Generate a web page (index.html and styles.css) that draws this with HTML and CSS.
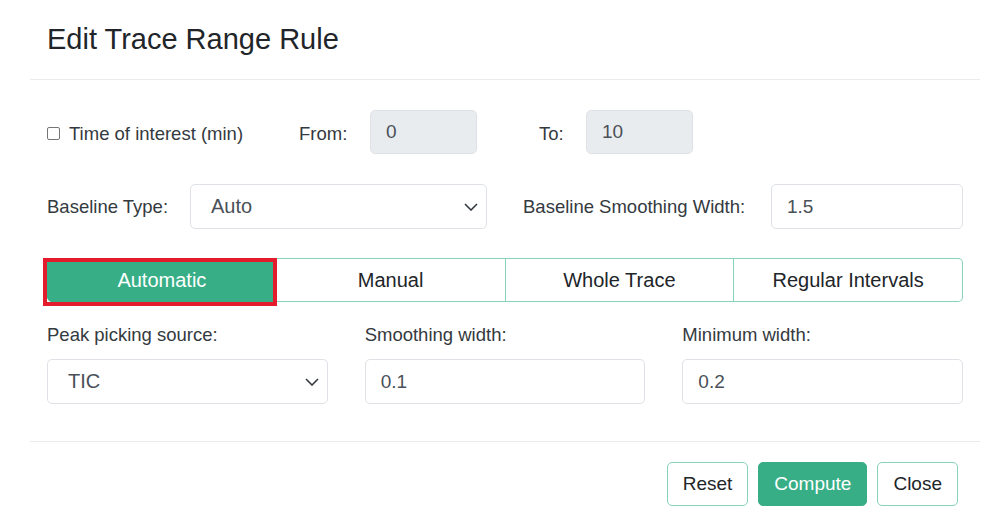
FILE: index.html
```html
<!DOCTYPE html>
<html lang="en">

<head>
    <meta charset="UTF-8">
    <meta name="viewport" content="width=device-width, initial-scale=1.0">
    <title>Edit Trace Range Rule</title>
    <link rel="stylesheet" href="styles.css">
</head>

<body>
    <div class="modal">
        <div class="modal-header">
            <h1>Edit Trace Range Rule</h1>
        </div>

        <div class="modal-body">
            <div class="row time-row">
                <label class="check">
                    <span class="box"></span>
                    Time of interest (min)
                </label>
                <span class="lbl from-lbl">From:</span>
                <input class="field short" type="text" value="0" disabled>
                <span class="lbl to-lbl">To:</span>
                <input class="field short" type="text" value="10" disabled>
            </div>

            <div class="row base-row">
                <span class="lbl type-lbl">Baseline Type:</span>
                <div class="select type-select">
                    <span>Auto</span>
                    <svg class="chev" width="14" height="8" viewBox="0 0 14 8">
                        <path d="M1 1l6 6 6-6" fill="none" stroke="#343a40" stroke-width="1.6" />
                    </svg>
                </div>
                <span class="lbl smooth-lbl">Baseline Smoothing Width:</span>
                <input class="field smooth-input" type="text" value="1.5">
            </div>

            <div class="tabs">
                <button class="tab active">Automatic</button>
                <button class="tab">Manual</button>
                <button class="tab">Whole Trace</button>
                <button class="tab">Regular Intervals</button>
            </div>

            <div class="cols">
                <div class="col">
                    <label>Peak picking source:</label>
                    <div class="select">
                        <span>TIC</span>
                        <svg class="chev" width="14" height="8" viewBox="0 0 14 8">
                            <path d="M1 1l6 6 6-6" fill="none" stroke="#343a40" stroke-width="1.6" />
                        </svg>
                    </div>
                </div>
                <div class="col">
                    <label>Smoothing width:</label>
                    <input class="field" type="text" value="0.1">
                </div>
                <div class="col">
                    <label>Minimum width:</label>
                    <input class="field" type="text" value="0.2">
                </div>
            </div>
        </div>

        <div class="modal-footer">
            <button class="btn">Reset</button>
            <button class="btn primary">Compute</button>
            <button class="btn">Close</button>
        </div>
    </div>
</body>

</html>
```

FILE: styles.css
```css
body {
    font-family: "Liberation Sans", Arial, sans-serif;
    background-color: #fff;
    color: #212529;
    margin: 0;
    padding: 0;
}

.modal {
    width: 950px;
    margin-left: 30px;
}

.modal-header {
    height: 80px;
    box-sizing: border-box;
    display: flex;
    align-items: center;
    padding: 0 17px;
    border-bottom: 1px solid #e9ecef;
}

.modal-header h1 {
    margin: 0;
    font-size: 29px;
    font-weight: 400;
    color: #212529;
}

.modal-body {
    padding: 30px 17px 37px;
    border-bottom: 1px solid #e9ecef;
}

.row {
    display: flex;
    align-items: center;
}

.lbl,
.check,
.cols label {
    font-size: 18.5px;
    color: #343a40;
}

.time-row .lbl,
.time-row .check {
    padding-top: 3px;
}

.field {
    box-sizing: border-box;
    height: 45px;
    padding: 0 15px;
    border: 1px solid #dee2e6;
    border-radius: 5px;
    background-color: #fff;
    font-family: inherit;
    font-size: 19px;
    color: #495057;
}

.field:disabled {
    background-color: #e9ecef;
}

/* row 1 */
.time-row {
    height: 44px;
    margin-bottom: 30px;
}

.check {
    display: flex;
    align-items: center;
    gap: 9px;
    width: 252px;
}

.box {
    width: 11px;
    height: 11px;
    border: 1px solid #767676;
    border-radius: 2px;
}

.from-lbl {
    width: 71px;
}

.field.short {
    width: 107px;
    height: 44px;
}

.to-lbl {
    margin-left: 62px;
    width: 47px;
}

/* row 2 */
.base-row {
    margin-bottom: 29px;
}

.type-lbl {
    width: 143px;
}

.select {
    box-sizing: border-box;
    height: 45px;
    display: flex;
    align-items: center;
    justify-content: space-between;
    padding: 0 8px 0 20px;
    border: 1px solid #dee2e6;
    border-radius: 5px;
    font-size: 20px;
    color: #495057;
}

.type-select {
    width: 297px;
}

.smooth-lbl {
    margin-left: 36px;
    width: 248px;
}

.smooth-input {
    width: 192px;
}

/* tabs */
.tabs {
    display: flex;
    margin-bottom: 21px;
}

.tab {
    position: relative;
    flex: 1;
    height: 44px;
    border: 1px solid #86d3b7;
    border-left: none;
    background-color: #fff;
    font-family: inherit;
    font-size: 20px;
    color: #212529;
}

.tab:first-child {
    border-left: 1px solid #86d3b7;
    border-radius: 5px 0 0 5px;
}

.tab:last-child {
    border-radius: 0 5px 5px 0;
}

.tab.active {
    background-color: #38ae87;
    border-color: #38ae87;
    color: #fff;
}

.tab.active::after {
    content: "";
    position: absolute;
    top: -1px;
    left: -5px;
    right: -1px;
    bottom: -5px;
    border: 4px solid #e31b2c;
}

/* columns */
.cols {
    display: grid;
    grid-template-columns: repeat(3, 1fr);
    gap: 37px;
}

.col label {
    display: block;
    line-height: 24px;
    margin-bottom: 12px;
}

.col .field,
.col .select {
    width: 100%;
}

/* footer */
.modal-footer {
    display: flex;
    justify-content: flex-end;
    gap: 10px;
    padding: 20px 22px;
}

.btn {
    height: 44px;
    padding: 0 15px;
    border: 1px solid #86d3b7;
    border-radius: 5px;
    background-color: #fff;
    font-family: inherit;
    font-size: 19px;
    color: #212529;
}

.btn.primary {
    background-color: #38ae87;
    border-color: #38ae87;
    color: #fff;
}
```
